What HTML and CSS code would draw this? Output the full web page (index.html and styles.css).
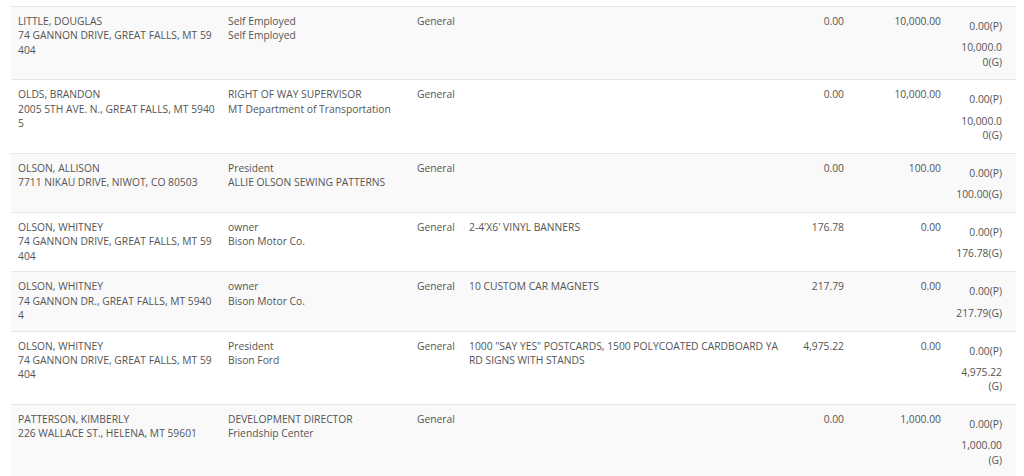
FILE: index.html
```html
<!DOCTYPE html>
<html>
<head>
<meta charset="utf-8">
<link rel="stylesheet" href="styles.css">
</head>
<body>
<div class="wrap">
<table class="grid">
  <colgroup>
    <col class="c-name"><col class="c-emp"><col class="c-type"><col class="c-desc"><col class="c-num"><col class="c-num2"><col class="c-tot">
  </colgroup>
  <tbody>
    <tr>
      <td class="who"><div>LITTLE, DOUGLAS</div><div>74 GANNON DRIVE, GREAT FALLS, MT 59404</div></td>
      <td><div>Self Employed</div><div>Self Employed</div></td>
      <td>General</td>
      <td></td>
      <td class="num">0.00</td>
      <td class="num">10,000.00</td>
      <td class="tot"><div class="p">0.00(P)</div><div class="g">10,000.00(G)</div></td>
    </tr>
    <tr>
      <td class="who"><div>OLDS, BRANDON</div><div>2005 5TH AVE. N., GREAT FALLS, MT 59405</div></td>
      <td><div>RIGHT OF WAY SUPERVISOR</div><div>MT Department of Transportation</div></td>
      <td>General</td>
      <td></td>
      <td class="num">0.00</td>
      <td class="num">10,000.00</td>
      <td class="tot"><div class="p">0.00(P)</div><div class="g">10,000.00(G)</div></td>
    </tr>
    <tr>
      <td class="who"><div>OLSON, ALLISON</div><div>7711 NIKAU DRIVE, NIWOT, CO 80503</div></td>
      <td><div>President</div><div>ALLIE OLSON SEWING PATTERNS</div></td>
      <td>General</td>
      <td></td>
      <td class="num">0.00</td>
      <td class="num">100.00</td>
      <td class="tot"><div class="p">0.00(P)</div><div class="g">100.00(G)</div></td>
    </tr>
    <tr>
      <td class="who"><div>OLSON, WHITNEY</div><div>74 GANNON DRIVE, GREAT FALLS, MT 59404</div></td>
      <td><div>owner</div><div>Bison Motor Co.</div></td>
      <td>General</td>
      <td>2-4'X6' VINYL BANNERS</td>
      <td class="num">176.78</td>
      <td class="num">0.00</td>
      <td class="tot"><div class="p">0.00(P)</div><div class="g">176.78(G)</div></td>
    </tr>
    <tr>
      <td class="who"><div>OLSON, WHITNEY</div><div>74 GANNON DR., GREAT FALLS, MT 59404</div></td>
      <td><div>owner</div><div>Bison Motor Co.</div></td>
      <td>General</td>
      <td>10 CUSTOM CAR MAGNETS</td>
      <td class="num">217.79</td>
      <td class="num">0.00</td>
      <td class="tot"><div class="p">0.00(P)</div><div class="g">217.79(G)</div></td>
    </tr>
    <tr>
      <td class="who"><div>OLSON, WHITNEY</div><div>74 GANNON DRIVE, GREAT FALLS, MT 59404</div></td>
      <td><div>President</div><div>Bison Ford</div></td>
      <td>General</td>
      <td>1000 "SAY YES" POSTCARDS, 1500 POLYCOATED CARDBOARD YARD SIGNS WITH STANDS</td>
      <td class="num">4,975.22</td>
      <td class="num">0.00</td>
      <td class="tot"><div class="p">0.00(P)</div><div class="g">4,975.22(G)</div></td>
    </tr>
    <tr>
      <td class="who"><div>PATTERSON, KIMBERLY</div><div>226 WALLACE ST., HELENA, MT 59601</div></td>
      <td><div>DEVELOPMENT DIRECTOR</div><div>Friendship Center</div></td>
      <td>General</td>
      <td></td>
      <td class="num">0.00</td>
      <td class="num">1,000.00</td>
      <td class="tot"><div class="p">0.00(P)</div><div class="g">1,000.00(G)</div></td>
    </tr>
  </tbody>
</table>
</div>
</body>
</html>
```
FILE: styles.css
```css
html, body {
  margin: 0;
  padding: 0;
  background: #ffffff;
}
body {
  font-family: "Open Sans", "Liberation Sans", sans-serif;
  font-size: 10.3px;
  line-height: 14.3px;
  color: #555555;
}
.wrap {
  padding: 6px 8px 0 11px;
}
.grid {
  width: 1005px;
  table-layout: fixed;
  border-collapse: collapse;
  border-spacing: 0;
}
.c-name { width: 210px; }
.c-emp { width: 189px; }
.c-type { width: 52px; }
.c-desc { width: 324px; }
.c-num { width: 65px; }
.c-num2 { width: 97px; }
.c-tot { width: 68px; }
.grid td {
  padding: 7px;
  vertical-align: top;
  border-top: 1px solid #e6e6e6;
  word-break: break-all;
  text-align: left;
}
.grid td.who {
  padding-right: 4.7px;
}
.grid tr:nth-child(odd) td {
  background: #f9f9f9;
}
.grid td.num {
  text-align: right;
}
.grid td.tot {
  text-align: right;
  padding-right: 14px;
}
.tot div {
  width: 46.2px;
  margin-left: auto;
}
.tot .p {
  margin-top: 5px;
}
.tot .g {
  margin-top: 7px;
  margin-bottom: 3.6px;
}
```
